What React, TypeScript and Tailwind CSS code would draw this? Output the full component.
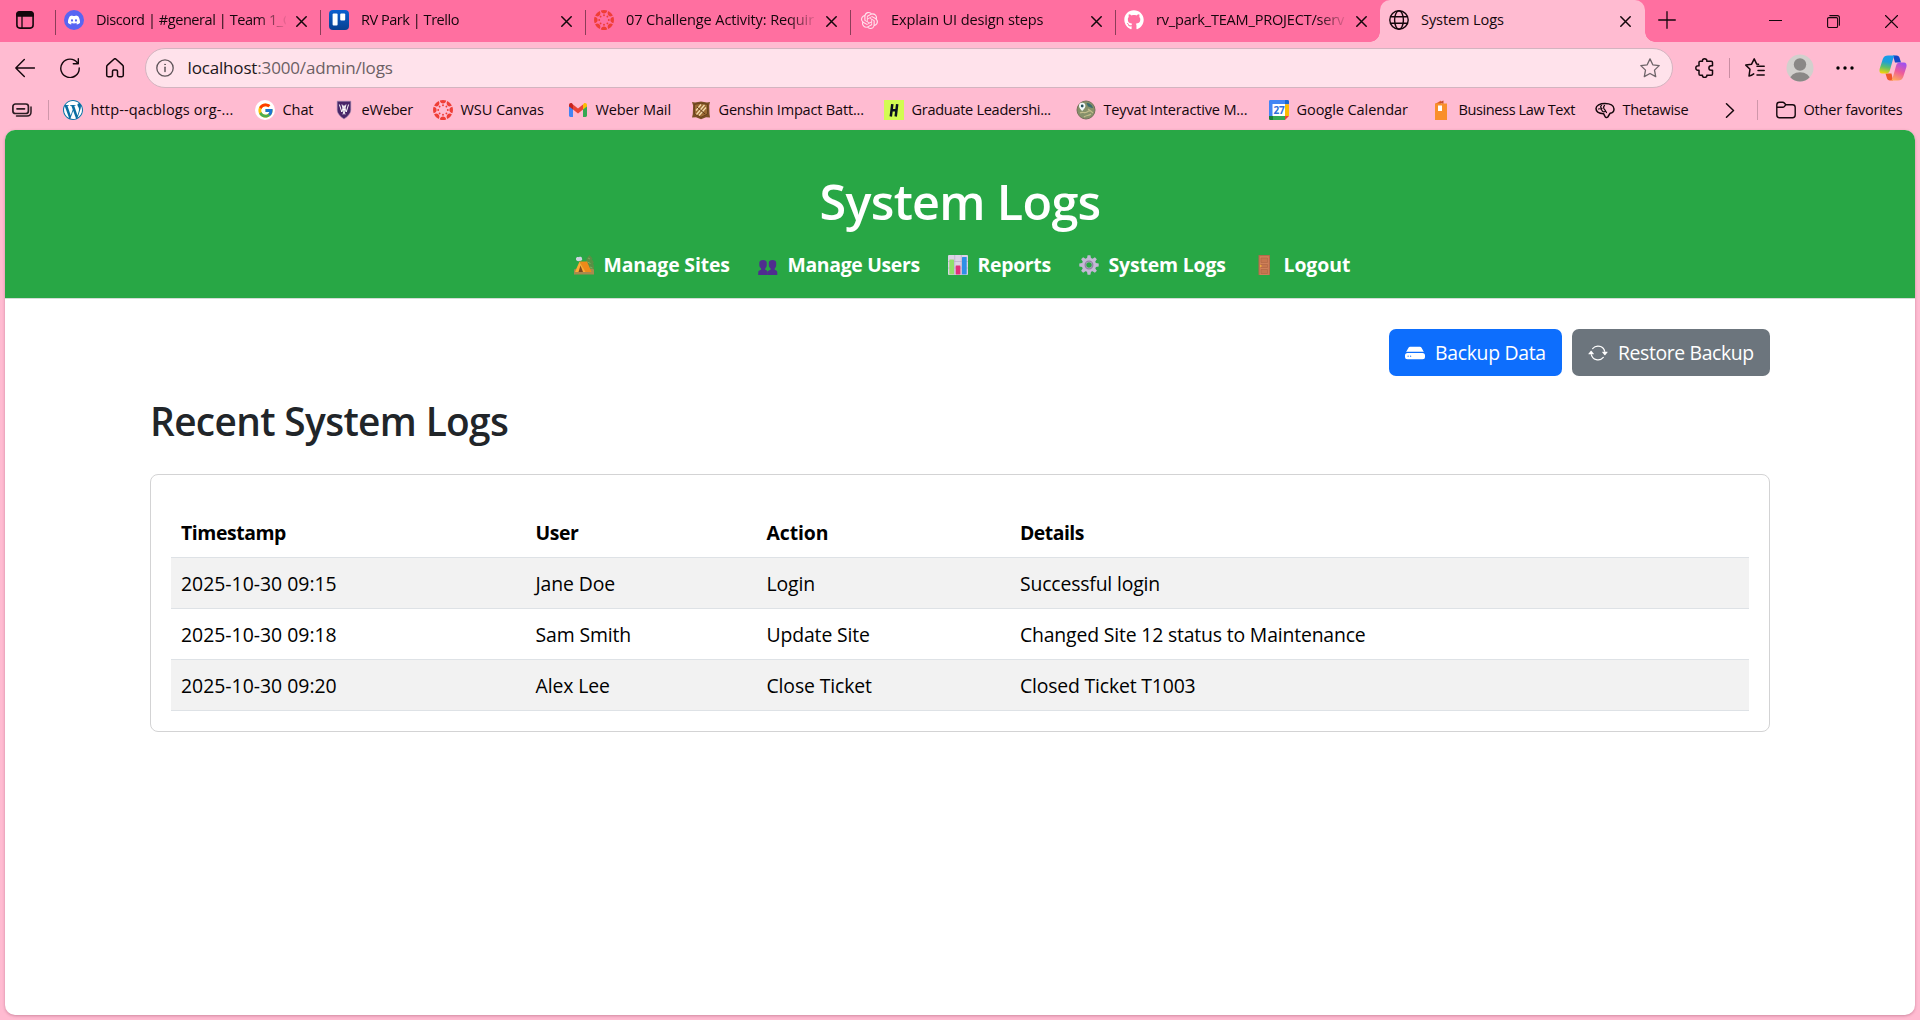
import React from "react";
import { SiWordpress, SiDiscord, SiOpenai } from "react-icons/si";
import { FcGoogle } from "react-icons/fc";
import { FaGithub } from "react-icons/fa";
import { BsHddFill, BsArrowRepeat } from "react-icons/bs";

type SvgProps = { children: React.ReactNode; className?: string; sw?: number; box?: string };

function Stroke({ children, className = "size-5", sw = 1.5, box = "0 0 20 20" }: SvgProps) {
  return (
    <svg
      viewBox={box}
      className={`shrink-0 ${className}`}
      fill="none"
      stroke="currentColor"
      strokeWidth={sw}
      strokeLinecap="round"
      strokeLinejoin="round"
    >
      {children}
    </svg>
  );
}

/* ---------- Site icons ---------- */

function DiscordIcon() {
  return (
    <span className="flex size-5 shrink-0 items-center justify-center rounded-full bg-[#5865f2] text-white">
      <SiDiscord className="size-3" />
    </span>
  );
}

function TrelloIcon() {
  return (
    <svg viewBox="0 0 20 20" className="size-5 shrink-0">
      <defs>
        <linearGradient id="trello" x1="0" y1="0" x2="0" y2="1">
          <stop offset="0" stopColor="#0a5fd0" />
          <stop offset="1" stopColor="#09408f" />
        </linearGradient>
      </defs>
      <rect width="20" height="20" rx="4" fill="url(#trello)" />
      <rect x="3.6" y="3.6" width="5" height="12" rx="1" fill="#fff" />
      <rect x="11.2" y="3.6" width="5" height="7" rx="1" fill="#fff" />
    </svg>
  );
}

function CanvasIcon() {
  const spokes = [0, 45, 90, 135, 180, 225, 270, 315];
  return (
    <svg viewBox="0 0 20 20" className="size-5 shrink-0" fill="#ef3e36">
      {spokes.map((a) => (
        <g key={a} transform={`rotate(${a} 10 10)`}>
          <path d="M6.800.6a10 10 0 0 1 6.400 0c-.3 1.900-1.600 3-3.200 3S7.100 2.500 6.800.6Z" />
          <circle cx="10" cy="5.200" r="0.950" />
        </g>
      ))}
    </svg>
  );
}

function GlobeIcon() {
  return (
    <Stroke sw={1.4}>
      <circle cx="10" cy="10" r="9.2" />
      <ellipse cx="10" cy="10" rx="4.4" ry="9.2" />
      <path d="M1.6 6.8h16.8M1.6 13.2h16.8" />
    </Stroke>
  );
}

function GoogleIcon() {
  return (
    <span className="flex size-5 shrink-0 items-center justify-center rounded-full bg-white">
      <FcGoogle className="size-[17px]" />
    </span>
  );
}

function WordpressIcon() {
  return (
    <span className="flex size-5 shrink-0 items-center justify-center rounded-full bg-white text-[#0a6ea3]">
      <SiWordpress className="size-5" />
    </span>
  );
}

function WeberIcon() {
  return (
    <svg viewBox="0 0 20 20" className="size-5 shrink-0">
      <path d="M3.2 1.2h13.600v8.600c0 4-3.600 7-6.800 9.200c-3.200-2.200-6.800-5.200-6.800-9.200Z" fill="#472568" stroke="#9c8bb0" strokeWidth=".6" />
      <path d="M5.400 4.500l2.400 7.500 2.200-6.500 2.200 6.500 2.400-7.500M8 4.500l3 10M12 4.500l-3 10" fill="none" stroke="#fff" strokeWidth="1" />
    </svg>
  );
}

function GmailIcon() {
  return (
    <svg viewBox="0 0 20 20" className="size-5 shrink-0">
      <path d="M1 5v10.500c0 .8.600 1.400 1.400 1.400H5V8.600Z" fill="#4285f4" />
      <path d="M19 5v10.500c0 .8-.600 1.400-1.400 1.400H15V8.600Z" fill="#34a853" />
      <path d="M15 4.600v5l4-3V5c0-1.900-2-2.500-3.200-1.500Z" fill="#fbbc04" />
      <path d="M5 9.600v-5l5 3.800 5-3.800v5l-5 3.800Z" fill="#ea4335" />
      <path d="M1 5v1.600l4 3v-5l-.8-1.100C3 2.500 1 3.100 1 5Z" fill="#c5221f" />
    </svg>
  );
}

function GenshinIcon() {
  return (
    <svg viewBox="0 0 20 20" className="size-5 shrink-0">
      <path d="M1 2l3 .5 6-1 6 1 3-.5-.8 3.500.3 8.500.5 3.500-4-.2-5 2-5-2-4 .2.800-3.500.3-8.500Z" fill="#7a4f25" />
      <path d="M3.500 4.500l6.500-1.300 6.500 1.300v9.500L10 17.300 3.500 14Z" fill="#9b6a34" stroke="#5c3917" strokeWidth=".7" />
      <path d="M5.500 14.500L13.500 5M8 15.500l7-8M5 10.500l5-6" stroke="#f3dcae" strokeWidth="1.300" />
      <path d="M6 7l8 7" stroke="#5c3917" strokeWidth="1" />
    </svg>
  );
}

function HandshakeIcon() {
  return (
    <svg viewBox="0 0 20 20" className="size-5 shrink-0">
      <rect width="20" height="20" fill="#d3fb52" />
      <path d="M8.300 4.200L6.800 16.500M13.200 4.200L11.700 16.500M7.500 10.300h5" stroke="#0b1220" strokeWidth="2.500" fill="none" />
    </svg>
  );
}

function TeyvatIcon() {
  return (
    <svg viewBox="0 0 20 20" className="size-5 shrink-0">
      <circle cx="10" cy="10" r="9" fill="#86906a" stroke="#75705a" strokeWidth="1" />
      <path d="M10.500 3c3 0 6 2 6.500 5-2 .5-3-1.500-5-1.500Z" fill="#3b6d6e" />
      <path d="M4 13c3-2 4 1 7-1s4-1 6 1M8 17c2-2 5-1 7-3M12 9l4 3" stroke="#c3bd8b" strokeWidth="1.200" fill="none" />
      <path d="M6.200 2.800a3.200 3.200 0 0 1 3.200 3.200c0 2-3.200 5-3.200 5S3 8 3 6a3.200 3.200 0 0 1 3.200-3.200Z" fill="#f4fafa" />
      <circle cx="6.200" cy="6" r="1.400" fill="#27525c" />
    </svg>
  );
}

function GoogleCalendarIcon() {
  return (
    <span className="relative flex size-5 shrink-0 items-center justify-center">
      <svg viewBox="0 0 20 20" className="absolute inset-0 size-5">
        <path d="M0 1.300C0 .6.600 0 1.300 0H16v4.300H4V16H0Z" fill="#4285f4" />
        <path d="M16 0h2.700C19.400 0 20 .6 20 1.300v3h-4Z" fill="#1967d2" />
        <path d="M16 4.300h4V16h-4Z" fill="#fbbc04" />
        <path d="M4 16h12v4H4Z" fill="#34a853" />
        <path d="M0 16h4v4H1.300C.6 20 0 19.400 0 18.700Z" fill="#188038" />
        <path d="M16 16h4l-4 4Z" fill="#ea4335" />
        <path d="M3.500 4H16V16H3.500Z" fill="#fff" />
      </svg>
      <span className="relative text-[10px] leading-none font-bold tracking-[-0.3px] text-[#2f6fdb]">27</span>
    </span>
  );
}

function BusinessLawIcon() {
  return (
    <svg viewBox="0 0 20 20" className="size-5 shrink-0">
      <path d="M4 4l6-3.500v3.500Z" fill="#e8702a" />
      <path d="M7.500 2.500L12.500.5V4Z" fill="#c94f2e" />
      <path d="M4 3.500h12V20H4Z" fill="#f98f2b" />
      <path d="M7 5.500h4v5.500H7Z" fill="#fff" />
    </svg>
  );
}

function ThetawiseIcon() {
  return (
    <Stroke sw={1.500}>
      <path d="M10 3.500c5 0 9 2 9 5.500 0 2.500-1.700 4-4 4.300L12.800 17c-1 1-2.300.5-2.800-.5l-1.300-2.700C4 13.500 1 12 1 8.500 1 5.500 5 3.500 10 3.500Z" />
      <path d="M6.500 5.500c-1.500 1-1 2.500.5 2.800M9.500 5.500c-1.500 1.500-1 3 .5 4.500l1.500 2.500M3.500 9c1.500-.5 3 0 3.500 1.500s2 1.500 3 1" strokeWidth={1.200} />
    </Stroke>
  );
}

function CopilotIcon() {
  return (
    <svg viewBox="0 0 28 26" className="h-[26px] w-7 shrink-0">
      <defs>
        <linearGradient id="cpA" x1="0.500" y1="0" x2="0.300" y2="1">
          <stop offset="0" stopColor="#1a9bec" />
          <stop offset=".35" stopColor="#1e9fd8" />
          <stop offset=".65" stopColor="#5dbf6a" />
          <stop offset="1" stopColor="#f3d20a" />
        </linearGradient>
        <linearGradient id="cpB" x1="0.700" y1="0" x2="0.300" y2="1">
          <stop offset="0" stopColor="#a04ff0" />
          <stop offset=".5" stopColor="#ee5a9a" />
          <stop offset="1" stopColor="#ffab5c" />
        </linearGradient>
      </defs>
      <path d="M14 .5h3.500c1.800 0 2.700 1 3.200 2.700l1.300 4.300h-6Z" fill="#1648c8" />
      <path d="M14 25.500H11c-1.800 0-2.700-1-3.200-2.700L6.500 18.500h6Z" fill="#f0562a" />
      <path d="M9 .5h8c-1.500 0-2.300 1.200-2.800 3L11 15c-.6 2.200-1.500 3.500-3.500 3.500H3.200C.8 18.500 0 16.500.6 14L3.800 4C4.600 1.600 6.500.5 9 .5Z" fill="url(#cpA)" />
      <path d="M19 25.500h-8c1.500 0 2.300-1.200 2.800-3L17 11c.6-2.200 1.500-3.500 3.500-3.500h4.300c2.400 0 3.200 2 2.600 4.500l-3.200 10c-.8 2.400-2.700 3.500-5.200 3.500Z" fill="url(#cpB)" />
    </svg>
  );
}

/* ---------- Navigation pictograms ---------- */

function CampIcon() {
  return (
    <svg viewBox="0 0 20 20" className="size-5 shrink-0">
      <path d="M2 3.500c0-1.500 2-2 3-1.200C6 1.300 8.200 2 8 3.600 8.800 5 7.500 6.200 6 5.800 4.500 6.800 1.500 6 2 3.500Z" fill="#cfd3e2" />
      <path d="M15.500 0l3 3.500-.8.500 2.300 3.500-1 .5 1 3V15H11.500V8l1.300-3.500-.6-.5Z" fill="#5a8f45" />
      <path d="M14 3l2 1M13.500 7l3 1.500M16 12l2.500 1" stroke="#7bb05d" strokeWidth="1" />
      <path d="M0 14.500c4-2 16-2 20 0V19.500H0Z" fill="#a9894e" />
      <path d="M5.500 6.500H13L17.500 17H11Z" fill="#ee8a1a" />
      <path d="M5.500 6.500L1 17h10.500Z" fill="#ffab34" />
      <path d="M6.500 10.500L4.500 17h4.500Z" fill="#7c4a21" />
    </svg>
  );
}

function UsersIcon() {
  return (
    <svg viewBox="0 0 20 20" className="size-5 shrink-0" fill="#4f2d8f">
      <path d="M1.300 7.800C1.300 5.800 2.800 5 5 5s3.700.8 3.700 2.800v2.500c0 1.500-.8 2.500-1.500 3.200v1.200c1.700.4 2.600 1.200 2.600 3V20H.2v-2.300c0-1.800 1.100-2.600 2.900-3v-1.200c-.8-.7-1.800-1.700-1.800-3.200Z" />
      <path d="M10.800 7.800c0-2 1.500-2.800 3.700-2.800s3.700.8 3.700 2.800v2.500c0 1.500-.8 2.500-1.500 3.200v1.200c1.700.4 2.600 1.200 2.600 3V20H9.700v-2.300c0-1.800 1.100-2.600 2.900-3v-1.200c-.8-.7-1.800-1.700-1.800-3.200Z" />
    </svg>
  );
}

function ChartIcon() {
  return (
    <svg viewBox="0 0 20 20" className="size-5 shrink-0">
      <rect width="20" height="20" rx="1" fill="#dcd3e6" />
      <path d="M0 6.500h20M0 13h20M6.700 0v20M13.300 0v20" stroke="#b9aec8" strokeWidth=".7" />
      <rect x="1.300" y="4.500" width="4.700" height="15" rx=".6" fill="#8fe06a" />
      <rect x="7.700" y="10.500" width="4.700" height="9" rx=".6" fill="#e0307a" />
      <rect x="14" y="2" width="4.700" height="17.500" rx=".6" fill="#2f8fe6" />
    </svg>
  );
}

function GearIcon() {
  const teeth = [0, 45, 90, 135, 180, 225, 270, 315];
  return (
    <svg viewBox="0 0 20 20" className="size-5 shrink-0">
      {teeth.map((a) => (
        <path key={a} d="M7.800 4.500L8.600.3h2.800l.8 4.200Z" fill="#c4b8d6" transform={`rotate(${a} 10 10)`} />
      ))}
      <circle cx="10" cy="10" r="5" fill="none" stroke="#c4b8d6" strokeWidth="4.400" />
      <circle cx="10" cy="10" r="3.800" fill="none" stroke="#8f83a3" strokeWidth="1.300" />
    </svg>
  );
}

function DoorIcon() {
  return (
    <svg viewBox="0 0 20 20" className="size-5 shrink-0">
      <rect x="4.500" y="0" width="11.500" height="20" rx=".6" fill="#b4694a" />
      <rect x="5.600" y="1.100" width="9.300" height="18.900" fill="#cf8059" />
      <path d="M7 3h6.500v4.500H7ZM7 9.500h6.500v3H7ZM7 14.500h6.500v4H7Z" fill="#c6764f" stroke="#ad6443" strokeWidth=".6" />
      <circle cx="6.800" cy="11" r=".9" fill="#f2b33c" />
    </svg>
  );
}

/* ---------- Browser chrome ---------- */

function CloseX() {
  return (
    <Stroke className="size-[11px]" box="0 0 11 11" sw={1.500}>
      <path d="M.8.8l9.400 9.400M10.200.8L.8 10.200" />
    </Stroke>
  );
}

const tabs = [
  { icon: <DiscordIcon />, label: "Discord | #general | Team 1_C", cls: "tracking-[-0.45px]" },
  { icon: <TrelloIcon />, label: "RV Park | Trello", cls: "tracking-[-0.48px]" },
  { icon: <CanvasIcon />, label: "07 Challenge Activity: Requir", cls: "tracking-[-0.12px]" },
  { icon: <SiOpenai className="mx-[1.5px] size-[17px] shrink-0 text-[#ffe4ee]" />, label: "Explain UI design steps", cls: "tracking-[-0.14px]" },
  { icon: <FaGithub className="size-5 shrink-0 text-white" />, label: "rv_park_TEAM_PROJECT/serv", cls: "tracking-[-0.2px]" },
];

function TabStrip() {
  return (
    <div className="flex h-[42px] bg-[#ff6fa0]">
      <div className="flex w-[55px] items-center pb-0.5 pl-4">
        <Stroke className="size-[18px]" box="0 0 18 18" sw={1.600}>
          <rect x=".9" y=".9" width="16.200" height="16.200" rx="3" />
          <path d="M1 3.500C1 2 2 1 3.500 1h11C16 1 17 2 17 3.500V5H1Z" fill="currentColor" />
          <path d="M6 5.500V17" strokeWidth={1.300} />
        </Stroke>
      </div>
      {tabs.map((t) => (
        <div key={t.label} className="flex w-[265px] items-center">
          <div className="mt-[2px] h-[25px] w-px bg-[#8b3d58]" />
          <div className="ml-2 flex w-5 shrink-0 pb-0.5">{t.icon}</div>
          <div className="ml-3 w-[190px] overflow-hidden whitespace-nowrap [mask-image:linear-gradient(to_right,#000_162px,transparent_192px)]">
            <div className={`pb-1 ${t.cls}`}>{t.label}</div>
          </div>
          <div className="ml-2.5 flex">
            <CloseX />
          </div>
        </div>
      ))}
      <div className="relative flex w-[265px] items-center rounded-t-[10px] bg-[#ffbbd1]">
        <div className="absolute bottom-0 -left-[10px] size-[10px] bg-[radial-gradient(circle_at_0_0,transparent_9.5px,#ffbbd1_10px)]" />
        <div className="absolute -right-[10px] bottom-0 size-[10px] bg-[radial-gradient(circle_at_100%_0,transparent_9.5px,#ffbbd1_10px)]" />
        <div className="ml-[9px] flex w-5 pb-0.5">
          <GlobeIcon />
        </div>
        <span className="ml-3 w-[191px] pb-1 tracking-[-0.1px]">System Logs</span>
        <div className="ml-2 flex">
          <CloseX />
        </div>
      </div>
      <div className="flex flex-1 items-center pb-[3px] pl-[13px]">
        <Stroke className="size-[18px]" box="0 0 18 18" sw={1.300}>
          <path d="M9 .7v16.600M.7 9h16.600" />
        </Stroke>
        <Stroke className="ml-[93px] size-[13px]" box="0 0 13 13" sw={1.200}>
          <path d="M.3 7.500h12.400" />
        </Stroke>
        <Stroke className="mt-[4px] ml-[45px] size-[13px]" box="0 0 13 13" sw={1.100}>
          <rect x=".6" y="2.600" width="10" height="9.900" rx="1.200" />
          <path d="M2.800.6h7.600c1.300 0 2 .8 2 2v7.600" />
        </Stroke>
        <Stroke className="mt-[4px] ml-[45px] size-[13px]" box="0 0 13 13" sw={1.100}>
          <path d="M.5.5l12 12M12.500.5l-12 12" />
        </Stroke>
      </div>
    </div>
  );
}

function Toolbar() {
  return (
    <div className="flex h-[52px] items-center">
      <Stroke className="ml-[15px] size-5" sw={1.400}>
        <path d="M19.500 10H.8M9.300 1.500L.8 10l8.500 8.500" />
      </Stroke>
      <Stroke className="ml-[25px] size-5" sw={1.400}>
        <path d="M17.500 5A9.200 9.200 0 1 0 19.200 10M18.300 .8v5h-5" />
      </Stroke>
      <Stroke className="ml-[25px] size-5" sw={1.500}>
        <path d="M1.700 8.700c0-.7.200-1.200.7-1.600L8.900 1.200c.7-.6 1.500-.6 2.200 0l6.500 5.900c.5.400.7.900.7 1.600v8.600c0 .9-.5 1.400-1.400 1.400h-3c-.9 0-1.400-.5-1.400-1.400v-4c0-.9-.5-1.400-1.400-1.400H8.900c-.9 0-1.400.5-1.400 1.400v4c0 .9-.5 1.400-1.400 1.400h-3c-.9 0-1.400-.5-1.400-1.400Z" />
      </Stroke>
      <div className="ml-[20px] flex h-10 w-[1528px] items-center rounded-full border border-[#d3b4c0] bg-[#ffe2eb]">
        <Stroke className="ml-[10px] size-[18px] text-[#5f555a]" box="0 0 18 18" sw={1.300}>
          <circle cx="9" cy="9" r="8.200" />
          <path d="M9 8.200v4.300" strokeWidth={1.500} />
          <circle cx="9" cy="5.400" r=".4" strokeWidth={1} />
        </Stroke>
        <span className="ml-[13.5px] text-[17px] tracking-[-0.16px] text-[#6b5f64]">
          <span className="text-[#1c171a]">localhost</span>:3000/admin/logs
        </span>
        <Stroke className="mr-[12px] ml-auto size-5 text-[#6e6469]" sw={1.300}>
          <path d="M10 .9l2.800 5.900 6.400.8-4.700 4.500 1.200 6.500L10 15.500l-5.700 3.100 1.200-6.500L.8 7.600l6.400-.8Z" />
        </Stroke>
      </div>
      <Stroke className="ml-[22px] size-5" sw={1.500}>
        <path d="M5.300 3.200h2.200C7.200 1.600 8.300.8 9.600.8s2.500.8 2.200 2.400h4.400c.8 0 1.300.5 1.300 1.300v3.200h-1.300c-1.400 0-2.300 1-2.300 2.300s.9 2.300 2.300 2.300h1.300v3.600c0 .8-.5 1.300-1.300 1.300h-4.400c.3 1.500-.900 2.200-2.200 2.200s-2.400-.7-2.100-2.200H5.300c-.8 0-1.300-.5-1.300-1.300v-3.700C2.200 12.500.8 11.600.8 10s1.400-2.500 3.200-2.200V4.500c0-.8.500-1.300 1.300-1.300Z" />
      </Stroke>
      <div className="ml-[14px] h-5 w-px bg-[#c98da2]" />
      <Stroke className="ml-[15px] size-5" sw={1.500}>
        <path d="M13.500 6.300l-1.800-.2L9.200.9 6.600 6.200.8 7.100l4.200 4.100-1 6.800c1.700-.3 3.300-1 4.700-2.100M12 8.200h7.200M13 12.500h6.200M12 17h7.200" />
      </Stroke>
      <svg viewBox="0 0 28 28" className="ml-[21px] size-7 shrink-0">
        <defs>
          <clipPath id="avatar">
            <circle cx="14" cy="14" r="13.500" />
          </clipPath>
        </defs>
        <circle cx="14" cy="14" r="13.500" fill="#d2d0cd" />
        <g clipPath="url(#avatar)" fill="#8a8886">
          <circle cx="14" cy="10.500" r="6.200" />
          <ellipse cx="14" cy="26" rx="10.300" ry="7.800" />
        </g>
      </svg>
      <svg viewBox="0 0 18 4" className="ml-[22px] h-1 w-[18px] shrink-0">
        <circle cx="2" cy="2" r="1.700" />
        <circle cx="9" cy="2" r="1.700" />
        <circle cx="16" cy="2" r="1.700" />
      </svg>
      <div className="ml-[25px]">
        <CopilotIcon />
      </div>
    </div>
  );
}

const bookmarks = [
  { icon: <WordpressIcon />, label: "http--qacblogs org-...", w: "w-[192px]", cls: "tracking-[0.12px]" },
  { icon: <GoogleIcon />, label: "Chat", w: "w-[79px]", cls: "tracking-[-0.1px]" },
  { icon: <WeberIcon />, label: "eWeber", w: "w-[99px]", cls: "tracking-[-0.2px]" },
  { icon: <CanvasIcon />, label: "WSU Canvas", w: "w-[135px]", cls: "tracking-[-0.1px]" },
  { icon: <GmailIcon />, label: "Weber Mail", w: "w-[123px]", cls: "tracking-[-0.15px]" },
  { icon: <GenshinIcon />, label: "Genshin Impact Batt...", w: "w-[193px]", cls: "tracking-[-0.2px]" },
  { icon: <HandshakeIcon />, label: "Graduate Leadershi...", w: "w-[192px]", cls: "tracking-[-0.3px]" },
  { icon: <TeyvatIcon />, label: "Teyvat Interactive M...", w: "w-[193px]", cls: "tracking-[-0.17px]" },
  { icon: <GoogleCalendarIcon />, label: "Google Calendar", w: "w-[162px]", cls: "tracking-[-0.08px]" },
  { icon: <BusinessLawIcon />, label: "Business Law Text", w: "w-[164px]", cls: "tracking-[-0.4px]" },
  { icon: <ThetawiseIcon />, label: "Thetawise", w: "w-[130px]", cls: "tracking-[-0.28px]" },
];

function BookmarksBar() {
  return (
    <div className="flex h-9 items-center pb-1">
      <Stroke className="ml-3 size-5 text-[#2b1c22]" sw={1.700}>
        <rect x=".9" y="4" width="15.500" height="9.500" rx="2.500" />
        <path d="M5 8.800h7.500" />
        <path d="M4.500 16h10.500c2.500 0 4-1.500 4-4V7" strokeWidth={1.500} />
      </Stroke>
      <div className="ml-4 h-5 w-px bg-[#cf97aa]" />
      <div className="ml-[14px] flex">
        {bookmarks.map((b) => (
          <div key={b.label} className={`flex shrink-0 items-center gap-[7.5px] whitespace-nowrap ${b.w}`}>
            {b.icon}
            <span className={`pb-0.5 ${b.cls}`}>{b.label}</span>
          </div>
        ))}
      </div>
      <Stroke className="h-[15px] w-[10px]" box="0 0 10 15" sw={1.500}>
        <path d="M1.500.8l7 6.700-7 6.700" />
      </Stroke>
      <div className="ml-[22px] h-5 w-px bg-[#cf97aa]" />
      <div className="ml-[18px] flex items-center gap-[7.5px] whitespace-nowrap">
        <Stroke sw={1.400}>
          <path d="M.8 5c0-1.700 1-2.700 2.700-2.700h3.200c.7 0 1.200.2 1.600.7l1.500 1.800h6.700c1.700 0 2.700 1 2.700 2.700v7.500c0 1.700-1 2.700-2.700 2.700h-13C1.800 17.700.8 16.700.8 15ZM.8 7.300h5.900c.7 0 1.200-.2 1.600-.7l1.500-1.800" />
        </Stroke>
        <span className="pb-0.5 tracking-[-0.22px]">Other favorites</span>
      </div>
    </div>
  );
}

/* ---------- Page ---------- */

const nav = [
  { icon: <CampIcon />, label: "Manage Sites", w: "w-[184px]", cls: "tracking-[-0.15px]" },
  { icon: <UsersIcon />, label: "Manage Users", w: "w-[190px]", cls: "tracking-[-0.32px]" },
  { icon: <ChartIcon />, label: "Reports", w: "w-[131px]", cls: "tracking-[-0.3px]" },
  { icon: <GearIcon />, label: "System Logs", w: "w-[175px]", cls: "tracking-[-0.15px]" },
  { icon: <DoorIcon />, label: "Logout", w: "w-[97px]", cls: "tracking-[-0.05px]" },
];

const logs = [
  ["2025-10-30 09:15", "Jane Doe", "Login", "Successful login"],
  ["2025-10-30 09:18", "Sam Smith", "Update Site", "Changed Site 12 status to Maintenance"],
  ["2025-10-30 09:20", "Alex Lee", "Close Ticket", "Closed Ticket T1003"],
];

const columns = "grid grid-cols-[354.500px_231px_253.500px_1fr] items-center border-b border-[#dee2e6] px-[10px] pt-0.5 whitespace-nowrap";

export default function App() {
  return (
    <div className="flex h-[1020px] w-[1920px] flex-col overflow-hidden bg-[#ffbbd1] font-['Open_Sans',sans-serif] text-[14.55px] leading-5 text-[#14070c]">
      <TabStrip />
      <Toolbar />
      <BookmarksBar />
      <main className="mx-[5px] mb-[5px] flex-1 overflow-hidden rounded-[10px] bg-white text-[19.4px] leading-[30px] text-black shadow-[0_1px_3px_rgba(120,40,70,0.35)]">
        <header className="h-[169px] border-b border-[#d4dcd6] bg-[#28a745] pt-[41px] text-white">
          <h1 className="text-center text-[48.5px] leading-[60px] font-semibold tracking-[-0.7px]">System Logs</h1>
          <nav className="mt-[18.5px] ml-[569px] flex font-bold">
            {nav.map((n) => (
              <a key={n.label} className={`flex items-center gap-[9.5px] whitespace-nowrap ${n.w}`}>
                {n.icon}
                <span className={n.cls}>{n.label}</span>
              </a>
            ))}
          </nav>
        </header>
        <section className="mx-[145px] pt-[30px]">
          <div className="flex justify-end gap-[10px] text-white">
            <button className="flex h-[47px] w-[173px] items-center gap-[10px] rounded-[7px] bg-[#0d6efd] pl-4 whitespace-nowrap">
              <BsHddFill className="size-5 shrink-0" />
              <span className="tracking-[-0.3px]">Backup Data</span>
            </button>
            <button className="flex h-[47px] w-[198px] items-center gap-[10px] rounded-[7px] bg-[#6c757d] pl-4 whitespace-nowrap">
              <BsArrowRepeat className="size-5 shrink-0" />
              <span className="tracking-[-0.38px]">Restore Backup</span>
            </button>
          </div>
          <h2 className="mt-[21px] text-[38.8px] leading-[48px] font-semibold tracking-[-0.64px] text-[#212529]">Recent System Logs</h2>
          <div className="mt-[29px] h-[258px] rounded-[8px] border border-[#d3d3d4] px-5 pt-8">
            <div className={`h-[51px] font-bold ${columns}`}>
              <span className="tracking-[-0.42px]">Timestamp</span>
              <span className="tracking-[-0.45px]">User</span>
              <span className="tracking-[-0.1px]">Action</span>
              <span className="tracking-[-0.5px]">Details</span>
            </div>
            {logs.map((row, i) => (
              <div key={row[0]} className={`h-[51px] ${columns} ${i % 2 === 0 ? "bg-[#f2f2f2]" : "bg-white"}`}>
                <span>{row[0]}</span>
                <span className="tracking-[-0.12px]">{row[1]}</span>
                <span className="tracking-[-0.13px]">{row[2]}</span>
                <span className="tracking-[-0.17px]">{row[3]}</span>
              </div>
            ))}
          </div>
        </section>
      </main>
    </div>
  );
}
